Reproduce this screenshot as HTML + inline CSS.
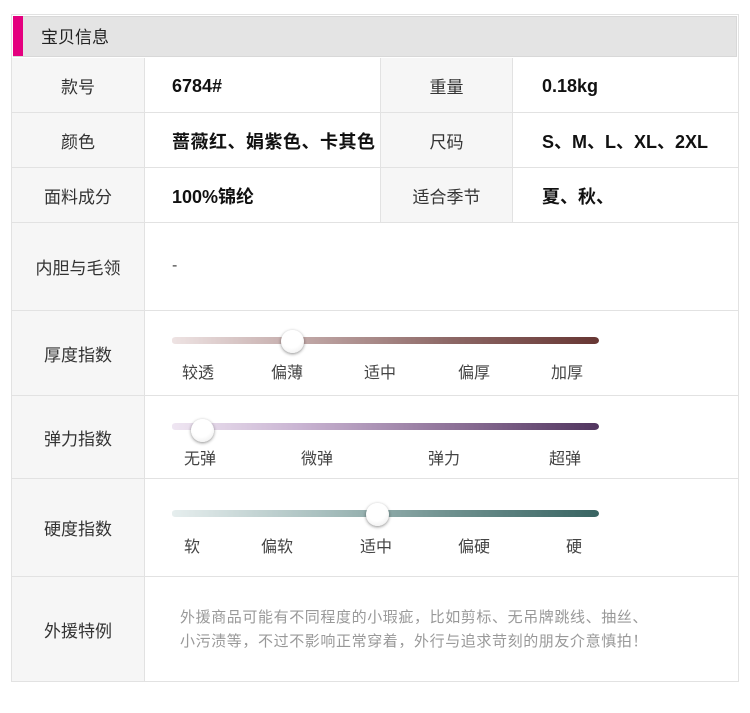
<!DOCTYPE html>
<html><head><meta charset="utf-8"><style>
*{margin:0;padding:0;box-sizing:border-box}
body{width:750px;height:713px;background:#fff;position:relative;overflow:hidden;font-family:"Liberation Sans","Noto Sans CJK SC",sans-serif}
.a{position:absolute}
.lbl{position:absolute;left:12px;width:133px;background:#f6f6f6;color:#333;font-size:17px;display:flex;align-items:center;justify-content:center;border-right:1px solid #e2e2e2}
.lbl2{position:absolute;left:380px;width:133px;background:#f6f6f6;color:#333;font-size:17px;display:flex;align-items:center;justify-content:center;border-left:1px solid #e2e2e2;border-right:1px solid #e2e2e2}
.val{position:absolute;font-size:18px;color:#111;font-weight:bold;display:flex;align-items:center}
.hl{position:absolute;left:12px;width:726px;height:1px;background:#e2e2e2}
.trk{position:absolute;left:172px;width:427px;height:7px;border-radius:4px 5px 5px 4px / 3px 4px 4px 3px}
.knob{position:absolute;width:23px;height:23px;border-radius:50%;background:radial-gradient(circle at 45% 35%,#fff 50%,#e8e8e8 100%);box-shadow:0 1px 3px rgba(0,0,0,.45)}
.t{position:absolute;font-size:16px;color:#444;transform:translateX(-50%);white-space:nowrap}
</style></head><body>
<div class="a" style="left:11px;top:14px;width:728px;height:668px;border:1px solid #e2e2e2"></div>
<div class="a" style="left:13px;top:16px;width:724px;height:41px;background:#e4e4e4;border:1px solid #d8d8d8"></div>
<div class="a" style="left:13px;top:16px;width:10px;height:40px;background:#e4007f"></div>
<div class="a" style="left:41px;top:23px;font-size:17px;color:#222">宝贝信息</div>

<div class="lbl" style="top:58px;height:54px">款号</div>
<div class="lbl" style="top:113px;height:54px">颜色</div>
<div class="lbl" style="top:168px;height:54px">面料成分</div>
<div class="lbl" style="top:223px;height:87px">内胆与毛领</div>
<div class="lbl" style="top:311px;height:84px">厚度指数</div>
<div class="lbl" style="top:396px;height:82px">弹力指数</div>
<div class="lbl" style="top:479px;height:97px">硬度指数</div>
<div class="lbl" style="top:577px;height:104px">外援特例</div>
<div class="lbl2" style="top:58px;height:54px">重量</div>
<div class="lbl2" style="top:113px;height:54px">尺码</div>
<div class="lbl2" style="top:168px;height:54px">适合季节</div>

<div class="hl" style="top:112px"></div>
<div class="hl" style="top:167px"></div>
<div class="hl" style="top:222px"></div>
<div class="hl" style="top:310px"></div>
<div class="hl" style="top:395px"></div>
<div class="hl" style="top:478px"></div>
<div class="hl" style="top:576px"></div>

<div class="val" style="left:172px;top:58px;height:56px">6784#</div>
<div class="val" style="left:172px;top:113px;height:56px;letter-spacing:0.5px">蔷薇红、娟紫色、卡其色</div>
<div class="val" style="left:172px;top:168px;height:56px">100%锦纶</div>
<div class="val" style="left:542px;top:58px;height:56px">0.18kg</div>
<div class="val" style="left:542px;top:113px;height:56px">S、M、L、XL、2XL</div>
<div class="val" style="left:542px;top:168px;height:56px">夏、秋、</div>
<div class="a" style="left:172px;top:257px;font-size:16px;color:#444">-</div>

<div class="trk" style="top:337px;background:linear-gradient(90deg,#eee3e3,#c2a9a8 30%,#8d6866 65%,#673633)"></div>
<div class="knob" style="left:281px;top:330px"></div>
<div class="t" style="left:198px;top:359px">较透</div><div class="t" style="left:287px;top:359px">偏薄</div><div class="t" style="left:380px;top:359px">适中</div><div class="t" style="left:474px;top:359px">偏厚</div><div class="t" style="left:567px;top:359px">加厚</div>

<div class="trk" style="top:423px;background:linear-gradient(90deg,#efe6f2,#c9b4d2 30%,#8f7399 65%,#51355f)"></div>
<div class="knob" style="left:191px;top:419px"></div>
<div class="t" style="left:200px;top:445px">无弹</div><div class="t" style="left:317px;top:445px">微弹</div><div class="t" style="left:444px;top:445px">弹力</div><div class="t" style="left:565px;top:445px">超弹</div>

<div class="trk" style="top:510px;background:linear-gradient(90deg,#e6eeee,#a9c0bf 35%,#6f918f 65%,#386462)"></div>
<div class="knob" style="left:366px;top:503px"></div>
<div class="t" style="left:192px;top:533px">软</div><div class="t" style="left:277px;top:533px">偏软</div><div class="t" style="left:376px;top:533px">适中</div><div class="t" style="left:474px;top:533px">偏硬</div><div class="t" style="left:574px;top:533px">硬</div>

<div class="a" style="left:180px;top:606px;font-size:15px;line-height:24px;color:#999;width:540px;letter-spacing:0.6px;white-space:nowrap">外援商品可能有不同程度的小瑕疵，比如剪标、无吊牌跳线、抽丝、<br>小污渍等，不过不影响正常穿着，外行与追求苛刻的朋友介意慎拍！</div>
</body></html>
